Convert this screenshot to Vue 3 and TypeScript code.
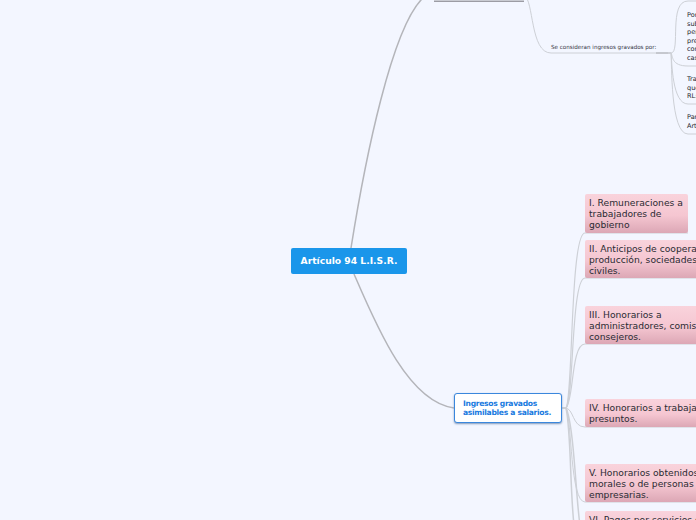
<script setup lang="ts">
interface PinkNode { top: number; height: number; width: number; lines: string[] }
const pink: PinkNode[] = [
  { top: 194, height: 39, width: 103, lines: ['I. Remuneraciones a', 'trabajadores de', 'gobierno'] },
  { top: 240, height: 38, width: 200, lines: ['II. Anticipos de cooperativas de', 'producción, sociedades y asociaciones', 'civiles.'] },
  { top: 306, height: 38, width: 200, lines: ['III. Honorarios a', 'administradores, comisarios y', 'consejeros.'] },
  { top: 399, height: 28, width: 200, lines: ['IV. Honorarios a trabajadores', 'presuntos.'] },
  { top: 464, height: 38, width: 200, lines: ['V. Honorarios obtenidos de personas', 'morales o de personas físicas', 'empresarias.'] },
  { top: 511, height: 38, width: 200, lines: ['VI. Pagos por servicios de'] },
]
const small = [
  { top: 11, lines: ['Por', 'sub', 'per', 'pre', 'con', 'cas'] },
  { top: 75, lines: ['Tra', 'que', 'RL:'] },
  { top: 113, lines: ['Par', 'Art'] },
]
const edges: { d: string; w: number; c: string }[] = [
  { d: 'M351 248C365 160 392 25 424 -3', w: 1.5, c: '#b4b5ba' },
  { d: 'M354 274C376 325 408 402 454 408', w: 1.5, c: '#b4b5ba' },
  { d: 'M524 -5C534 0 530 53 551 53H668', w: 1, c: '#cdd0d6' },
  { d: 'M656 53H671', w: 1, c: '#aaacb2' },
  { d: 'M668 53H671C681 53 668 1 688 1H696', w: 1, c: '#cdd0d6' },
  { d: 'M671 53C673 56 671 66 688 66H696', w: 1, c: '#cdd0d6' },
  { d: 'M671 53C672 62 672 104 688 104H696', w: 1, c: '#cdd0d6' },
  { d: 'M671 53C672 62 670 134 688 134H696', w: 1, c: '#cdd0d6' },
  { d: 'M561 408H566C573 400 570 233 585 233H688', w: 1.2, c: '#cdd0d6' },
  { d: 'M561 408H566C574 400 571 278 585 278H696', w: 1.2, c: '#cdd0d6' },
  { d: 'M561 408H566C574 400 571 344 585 344H696', w: 1.2, c: '#cdd0d6' },
  { d: 'M561 408H565C574 408 572 427 585 427H696', w: 1, c: '#cdd0d6' },
  { d: 'M561 408H566C572 420 570 502 585 502H696', w: 1, c: '#cdd0d6' },
  { d: 'M561 408H566C574 425 576 500 580 525', w: 1.5, c: '#cdd0d6' },
  { d: 'M561 408H566C571 430 570 490 574 525', w: 1.5, c: '#cdd0d6' },
]
</script>

<template>
  <main class="canvas">
    <svg class="edges" width="696" height="520" viewBox="0 0 696 520" aria-hidden="true">
      <path v-for="(e, i) in edges" :key="i" :d="e.d" fill="none" :stroke="e.c" :stroke-width="e.w" />
    </svg>

    <div class="top-node"></div>
    <div class="central">Artículo 94 L.I.S.R.</div>
    <div class="blue">Ingresos gravados<br />asimilables a salarios.</div>
    <div class="label">Se consideran ingresos gravados por:</div>

    <div v-for="s in small" :key="s.top" class="small" :style="{ top: s.top + 'px' }">
      <span v-for="l in s.lines" :key="l">{{ l }}</span>
    </div>

    <div
      v-for="p in pink"
      :key="p.top"
      class="pink"
      :style="{ top: p.top + 'px', height: p.height + 'px', width: p.width + 'px' }"
    >
      <span v-for="l in p.lines" :key="l">{{ l }}</span>
    </div>
  </main>
</template>

<style>
html, body { margin: 0; overflow: hidden; background: #f3f6ff; }
</style>

<style scoped>
.canvas {
  position: relative;
  width: 696px;
  height: 520px;
  overflow: hidden;
  background: #f3f6ff;
  font-family: "DejaVu Sans", sans-serif;
}
.edges { position: absolute; left: 0; top: 0; }
.top-node {
  position: absolute;
  left: 434px;
  top: -20px;
  width: 90px;
  height: 21px;
  background: #c9cbd2;
  border-bottom: 1px solid #9c9ca4;
}
.central {
  position: absolute;
  left: 291px;
  top: 248px;
  width: 116px;
  height: 26px;
  box-sizing: border-box;
  border-radius: 2px;
  background: #1a96ea;
  color: #fff;
  font-size: 9.2px;
  font-weight: 700;
  line-height: 26px;
  text-align: center;
}
.blue {
  position: absolute;
  left: 454px;
  top: 393px;
  width: 108px;
  height: 30px;
  box-sizing: border-box;
  padding: 5px 0 0 8px;
  background: #fff;
  border: 1.5px solid #3a87dd;
  border-radius: 3px;
  box-shadow: 0 1px 2px #7f98bb;
  color: #1a7ae0;
  font-size: 7.6px;
  letter-spacing: -0.3px;
  font-weight: 700;
  line-height: 9px;
  white-space: nowrap;
}
.label {
  position: absolute;
  left: 551px;
  top: 43px;
  color: #33353f;
  font-size: 5.6px;
  line-height: 8px;
  white-space: nowrap;
}
.small {
  position: absolute;
  left: 687px;
  display: flex;
  flex-direction: column;
  color: #24262e;
  font-size: 6.5px;
  line-height: 8.6px;
  white-space: nowrap;
}
.pink {
  position: absolute;
  left: 585px;
  box-sizing: border-box;
  padding: 3px 0 0 4px;
  display: flex;
  flex-direction: column;
  border-radius: 2px;
  background: linear-gradient(#f9d3dc, #f5c6d1 55%, #dca7b5);
  color: #2a2b33;
  font-size: 9.2px;
  line-height: 11px;
  white-space: nowrap;
}
</style>
